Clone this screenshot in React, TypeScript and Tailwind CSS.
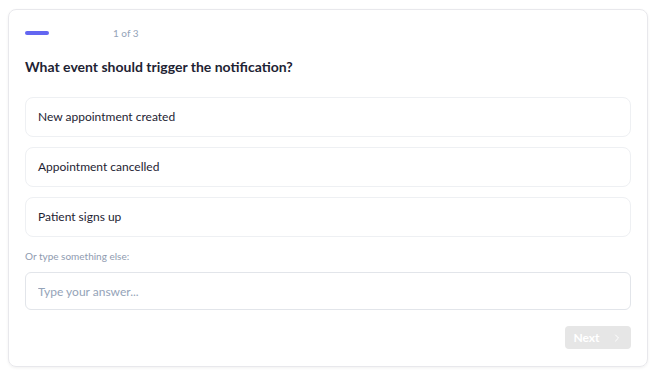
import React, { useState } from 'react';
import { ChevronRight } from 'lucide-react';

const options = ['New appointment created', 'Appointment cancelled', 'Patient signs up'];

export default function App() {
  const [selected, setSelected] = useState<string | null>(null);
  const [answer, setAnswer] = useState('');

  return (
    <div className="w-[656px] h-[376px] bg-white p-2 pt-[9px]" style={{ fontFamily: 'Lato, "Noto Sans", sans-serif' }}>
      <div className="h-[358px] rounded-lg border border-[#e8e8ec] shadow-[0_1px_3px_rgba(0,0,0,0.06)] px-4 pt-[21px]">
        {/* Progress */}
        <div className="flex items-center h-[4px]">
          <div className="w-[72px] h-[4px] rounded-full">
            <div className="w-[24px] h-[4px] rounded-full bg-[#6366f1]" />
          </div>
          <span className="ml-[16px] text-[10px] text-[#94a3b8]">1 of 3</span>
        </div>

        <h2 className="mt-[22px] text-[14px] font-bold text-[#1e2333] leading-[20px]">
          What event should trigger the notification?
        </h2>

        <div className="mt-[20px] flex flex-col gap-[10px]">
          {options.map(o => (
            <button
              key={o}
              onClick={() => setSelected(o)}
              className={`h-[40px] w-full text-left px-[12px] rounded-lg border text-[12px] text-[#1e2333] ${selected === o ? 'border-[#6366f1]' : 'border-[#eef0f3]'}`}
            >
              {o}
            </button>
          ))}
        </div>

        <div className="mt-[13px] text-[10px] leading-[13px] text-[#8f9bb0]">Or type something else:</div>
        <input
          value={answer}
          onChange={e => setAnswer(e.target.value)}
          placeholder="Type your answer..."
          className="mt-[9px] h-[38px] w-full rounded-md border border-[#e2e5ea] px-[12px] text-[12px] text-[#1e2333] placeholder:text-[#94a3b8] outline-none"
        />

        <div className="mt-[16px] flex justify-end">
          <button
            disabled={!selected && !answer}
            className="h-[23px] w-[66px] rounded bg-[#e6e6e6] text-white text-[12px] font-bold flex items-center justify-center gap-[11px]"
          >
            Next
            <ChevronRight className="w-[12px] h-[12px]" strokeWidth={2} />
          </button>
        </div>
      </div>
    </div>
  );
}
